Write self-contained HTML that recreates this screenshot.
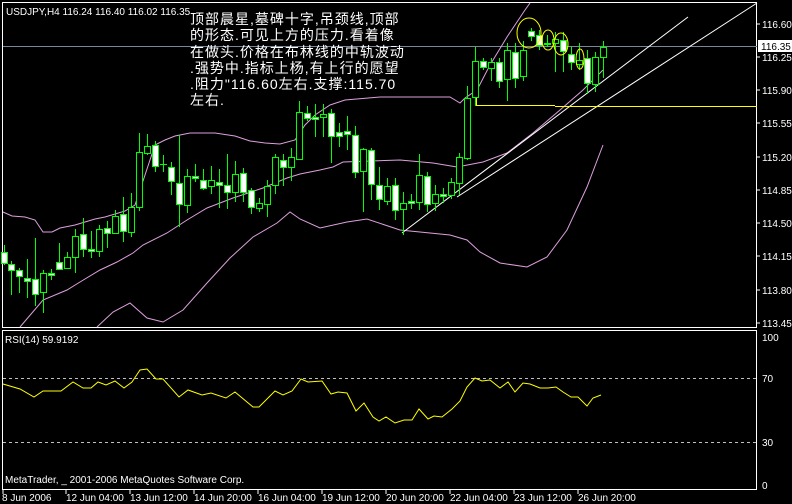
<!DOCTYPE html>
<html><head><meta charset="utf-8"><style>
html,body{margin:0;padding:0;background:#000;}
body{width:792px;height:504px;overflow:hidden;position:relative;}
svg{position:absolute;left:0;top:0;}
.t{font-family:"Liberation Sans",sans-serif;font-size:10px;fill:#fff;}
.cn{position:absolute;left:190px;top:11px;color:#fff;font-family:"Liberation Sans","WenQuanYi Zen Hei",sans-serif;font-size:14px;line-height:16.3px;letter-spacing:1px;white-space:pre;}
</style></head><body>
<svg width="792" height="504" xmlns="http://www.w3.org/2000/svg" shape-rendering="crispEdges">
<rect x="2.5" y="2.5" width="754" height="325" fill="none" stroke="#fff"/>
<rect x="2.5" y="330.5" width="754" height="159" fill="none" stroke="#fff"/>
<g stroke="#fff">
<line x1="757" y1="24" x2="760" y2="24"/><line x1="757" y1="57" x2="760" y2="57"/><line x1="757" y1="90" x2="760" y2="90"/><line x1="757" y1="123" x2="760" y2="123"/><line x1="757" y1="157" x2="760" y2="157"/><line x1="757" y1="190" x2="760" y2="190"/><line x1="757" y1="223" x2="760" y2="223"/><line x1="757" y1="256" x2="760" y2="256"/><line x1="757" y1="290" x2="760" y2="290"/><line x1="757" y1="323" x2="760" y2="323"/>
<line x1="3" y1="490" x2="3" y2="494"/><line x1="66" y1="490" x2="66" y2="494"/><line x1="130" y1="490" x2="130" y2="494"/><line x1="194" y1="490" x2="194" y2="494"/><line x1="258" y1="490" x2="258" y2="494"/><line x1="322" y1="490" x2="322" y2="494"/><line x1="386" y1="490" x2="386" y2="494"/><line x1="450" y1="490" x2="450" y2="494"/><line x1="514" y1="490" x2="514" y2="494"/><line x1="578" y1="490" x2="578" y2="494"/>
</g>
<g class="t">
<text x="762" y="28">116.60</text><text x="762" y="61">116.25</text><text x="762" y="94">115.90</text><text x="762" y="127">115.55</text><text x="762" y="161">115.20</text><text x="762" y="194">114.85</text><text x="762" y="227">114.50</text><text x="762" y="260">114.15</text><text x="762" y="294">113.80</text><text x="762" y="327">113.45</text>
<text x="762" y="341">100</text><text x="762" y="382">70</text><text x="762" y="446">30</text><text x="762" y="489">0</text>
<text x="2" y="501">8 Jun 2006</text><text x="66" y="501">12 Jun 04:00</text><text x="130" y="501">13 Jun 12:00</text><text x="194" y="501">14 Jun 20:00</text><text x="258" y="501">16 Jun 04:00</text><text x="322" y="501">19 Jun 12:00</text><text x="386" y="501">20 Jun 20:00</text><text x="450" y="501">22 Jun 04:00</text><text x="514" y="501">23 Jun 12:00</text><text x="578" y="501">26 Jun 20:00</text>
<text x="6" y="15">USDJPY,H4  116.24 116.40 116.02 116.35</text>
<text x="5" y="343">RSI(14) 59.9192</text>
<text x="5" y="483">MetaTrader, _ 2001-2006 MetaQuotes Software Corp.</text>
</g>
<line x1="3" y1="46.5" x2="757" y2="46.5" stroke="#778899"/>
<rect x="758" y="40" width="34" height="12" fill="#fff"/>
<text x="761" y="50" class="t" style="fill:#000">116.35</text>
<g fill="none" stroke="#dda0dd" shape-rendering="auto">
<polyline points="3,212 12,216 25,217 35,220 43,232 52,232 60,228 75,225 85,222 95,219 105,217 115,214 125,211 135,205 145,175 155,145 165,140 175,136 190,133 215,133 235,136 250,141 265,143 280,144 295,140 305,125 315,115 330,105 345,100 380,97 450,97 460,103 465,98 477,90 490,65 507,37 525,10 530,3"/>
<polyline points="20,327 43,300 67,290 80,282 100,270 117,262 133,253 143,245 167,233 187,220 207,208 233,198 263,188 287,178 300,174 320,170 333,167 343,162 400,160 433,163 457,167 483,162 507,153 533,133 560,110 583,90 603,70"/>
<polyline points="97,327 113,312 130,303 147,318 163,322 183,310 207,283 230,258 253,237 277,223 290,212 300,219 320,228 347,222 367,219 400,230 450,235 467,240 480,252 500,263 527,267 547,257 567,230 587,187 603,145"/>
</g>
<g stroke="#fff" shape-rendering="auto">
<line x1="402" y1="233" x2="688" y2="17"/>
<line x1="457" y1="197" x2="757" y2="3"/>
</g>
<line x1="476" y1="105.5" x2="555" y2="105.5" stroke="#ff0"/>
<line x1="555" y1="106.5" x2="757" y2="106.5" stroke="#ff0"/>
<line x1="476.5" y1="97" x2="476.5" y2="106" stroke="#ff0"/>
<g stroke="#0f0" shape-rendering="crispEdges">
<g>
<line x1="4.5" y1="245" x2="4.5" y2="265"/><line x1="11.5" y1="261" x2="11.5" y2="295"/><line x1="19.5" y1="268" x2="19.5" y2="293"/><line x1="27.5" y1="259" x2="27.5" y2="298"/><line x1="35.5" y1="238" x2="35.5" y2="306"/><line x1="43.5" y1="270" x2="43.5" y2="313"/><line x1="51.5" y1="269" x2="51.5" y2="280"/><line x1="59.5" y1="243" x2="59.5" y2="270"/><line x1="67.5" y1="252" x2="67.5" y2="268"/><line x1="75.5" y1="229" x2="75.5" y2="273"/><line x1="83.5" y1="218" x2="83.5" y2="257"/><line x1="91.5" y1="231" x2="91.5" y2="258"/><line x1="99.5" y1="225" x2="99.5" y2="257"/><line x1="107.5" y1="221" x2="107.5" y2="248"/><line x1="115.5" y1="210" x2="115.5" y2="234"/><line x1="123.5" y1="197" x2="123.5" y2="242"/><line x1="131.5" y1="193" x2="131.5" y2="237"/><line x1="139.5" y1="133" x2="139.5" y2="211"/><line x1="147.5" y1="134" x2="147.5" y2="155"/><line x1="155.5" y1="141" x2="155.5" y2="172"/><line x1="163.5" y1="155" x2="163.5" y2="172"/><line x1="160" y1="164.5" x2="167" y2="164.5"/><line x1="171.5" y1="162" x2="171.5" y2="195"/><line x1="179.5" y1="135" x2="179.5" y2="227"/><line x1="187.5" y1="169" x2="187.5" y2="213"/><line x1="195.5" y1="164" x2="195.5" y2="182"/><line x1="203.5" y1="169" x2="203.5" y2="190"/><line x1="211.5" y1="166" x2="211.5" y2="194"/><line x1="219.5" y1="169" x2="219.5" y2="208"/><line x1="227.5" y1="154" x2="227.5" y2="209"/><line x1="235.5" y1="161" x2="235.5" y2="202"/><line x1="243.5" y1="168" x2="243.5" y2="202"/><line x1="251.5" y1="188" x2="251.5" y2="214"/><line x1="259.5" y1="198" x2="259.5" y2="212"/><line x1="267.5" y1="180" x2="267.5" y2="217"/><line x1="275.5" y1="154" x2="275.5" y2="194"/><line x1="283.5" y1="154" x2="283.5" y2="186"/><line x1="291.5" y1="148" x2="291.5" y2="181"/><line x1="299.5" y1="101" x2="299.5" y2="160"/><line x1="307.5" y1="106" x2="307.5" y2="121"/><line x1="315.5" y1="104" x2="315.5" y2="137"/><line x1="323.5" y1="104" x2="323.5" y2="137"/><line x1="331.5" y1="109" x2="331.5" y2="163"/><line x1="339.5" y1="123" x2="339.5" y2="147"/><line x1="347.5" y1="116" x2="347.5" y2="150"/><line x1="355.5" y1="126" x2="355.5" y2="178"/><line x1="363.5" y1="148" x2="363.5" y2="212"/><line x1="371.5" y1="148" x2="371.5" y2="200"/><line x1="379.5" y1="167" x2="379.5" y2="210"/><line x1="387.5" y1="178" x2="387.5" y2="205"/><line x1="395.5" y1="178" x2="395.5" y2="220"/><line x1="403.5" y1="192" x2="403.5" y2="235"/><line x1="411.5" y1="194" x2="411.5" y2="209"/><line x1="419.5" y1="154" x2="419.5" y2="210"/><line x1="427.5" y1="172" x2="427.5" y2="212"/><line x1="435.5" y1="185" x2="435.5" y2="211"/><line x1="443.5" y1="188" x2="443.5" y2="203"/><line x1="451.5" y1="178" x2="451.5" y2="199"/><line x1="459.5" y1="153" x2="459.5" y2="195"/><line x1="467.5" y1="86" x2="467.5" y2="160"/><line x1="475.5" y1="47" x2="475.5" y2="106"/><line x1="483.5" y1="58" x2="483.5" y2="70"/><line x1="491.5" y1="58" x2="491.5" y2="81"/><line x1="499.5" y1="58" x2="499.5" y2="88"/><line x1="507.5" y1="43" x2="507.5" y2="101"/><line x1="515.5" y1="43" x2="515.5" y2="88"/><line x1="523.5" y1="41" x2="523.5" y2="81"/><line x1="531.5" y1="28" x2="531.5" y2="41"/><line x1="539.5" y1="30" x2="539.5" y2="50"/><line x1="547.5" y1="35" x2="547.5" y2="47"/><line x1="555.5" y1="32" x2="555.5" y2="72"/><line x1="563.5" y1="32" x2="563.5" y2="72"/><line x1="571.5" y1="47" x2="571.5" y2="70"/><line x1="579.5" y1="43" x2="579.5" y2="70"/><line x1="587.5" y1="50" x2="587.5" y2="94"/><line x1="595.5" y1="52" x2="595.5" y2="92"/><line x1="603.5" y1="41" x2="603.5" y2="78"/>
</g>
<g fill="#fff">
<rect x="1.5" y="252.5" width="6" height="11"/><rect x="8.5" y="264.5" width="6" height="6"/><rect x="16.5" y="270.5" width="6" height="6"/><rect x="24.5" y="278.5" width="6" height="3"/><rect x="32.5" y="279.5" width="6" height="15"/><rect x="48.5" y="273.5" width="6" height="2"/><rect x="56.5" y="262.5" width="6" height="7"/><rect x="80.5" y="234.5" width="6" height="15"/><rect x="88.5" y="249.5" width="6" height="2"/><rect x="104.5" y="228.5" width="6" height="5"/><rect x="120.5" y="214.5" width="6" height="17"/><rect x="152.5" y="145.5" width="6" height="21"/><rect x="168.5" y="167.5" width="6" height="14"/><rect x="176.5" y="183.5" width="6" height="21"/><rect x="192.5" y="176.5" width="6" height="2"/><rect x="200.5" y="180.5" width="6" height="8"/><rect x="216.5" y="182.5" width="6" height="3"/><rect x="224.5" y="185.5" width="6" height="7"/><rect x="240.5" y="173.5" width="6" height="19"/><rect x="248.5" y="190.5" width="6" height="17"/><rect x="280.5" y="160.5" width="6" height="7"/><rect x="304.5" y="113.5" width="6" height="5"/><rect x="312.5" y="117.5" width="6" height="2"/><rect x="328.5" y="113.5" width="6" height="23"/><rect x="336.5" y="132.5" width="6" height="4"/><rect x="344.5" y="131.5" width="6" height="3"/><rect x="352.5" y="135.5" width="6" height="37"/><rect x="368.5" y="150.5" width="6" height="34"/><rect x="376.5" y="185.5" width="6" height="14"/><rect x="392.5" y="185.5" width="6" height="25"/><rect x="408.5" y="201.5" width="6" height="2"/><rect x="424.5" y="176.5" width="6" height="28"/><rect x="440.5" y="194.5" width="6" height="2"/><rect x="480.5" y="61.5" width="6" height="6"/><rect x="496.5" y="62.5" width="6" height="19"/><rect x="512.5" y="52.5" width="6" height="26"/><rect x="528.5" y="31.5" width="6" height="5"/><rect x="536.5" y="35.5" width="6" height="10"/><rect x="544.5" y="43.5" width="6" height="1"/><rect x="560.5" y="40.5" width="6" height="11"/><rect x="568.5" y="54.5" width="6" height="8"/><rect x="584.5" y="58.5" width="6" height="25"/>
</g>
<g fill="#000">
<rect x="40.5" y="273.5" width="6" height="19"/><rect x="64.5" y="257.5" width="6" height="11"/><rect x="72.5" y="236.5" width="6" height="21"/><rect x="96.5" y="229.5" width="6" height="22"/><rect x="112.5" y="216.5" width="6" height="17"/><rect x="128.5" y="207.5" width="6" height="25"/><rect x="136.5" y="152.5" width="6" height="55"/><rect x="144.5" y="146.5" width="6" height="7"/><rect x="184.5" y="176.5" width="6" height="29"/><rect x="208.5" y="180.5" width="6" height="6"/><rect x="232.5" y="174.5" width="6" height="18"/><rect x="256.5" y="203.5" width="6" height="5"/><rect x="264.5" y="186.5" width="6" height="18"/><rect x="272.5" y="157.5" width="6" height="28"/><rect x="288.5" y="157.5" width="6" height="10"/><rect x="296.5" y="112.5" width="6" height="47"/><rect x="320.5" y="114.5" width="6" height="3"/><rect x="360.5" y="149.5" width="6" height="22"/><rect x="384.5" y="186.5" width="6" height="15"/><rect x="400.5" y="203.5" width="6" height="6"/><rect x="416.5" y="175.5" width="6" height="27"/><rect x="432.5" y="194.5" width="6" height="9"/><rect x="448.5" y="182.5" width="6" height="13"/><rect x="456.5" y="157.5" width="6" height="26"/><rect x="464.5" y="98.5" width="6" height="60"/><rect x="472.5" y="61.5" width="6" height="36"/><rect x="488.5" y="62.5" width="6" height="6"/><rect x="504.5" y="50.5" width="6" height="29"/><rect x="520.5" y="50.5" width="6" height="26"/><rect x="552.5" y="39.5" width="6" height="4"/><rect x="576.5" y="60.5" width="6" height="4"/><rect x="592.5" y="57.5" width="6" height="27"/><rect x="600.5" y="47.5" width="6" height="10"/>
</g>
</g>
<g fill="none" stroke="#ff0" shape-rendering="auto">
<ellipse cx="529" cy="33" rx="12" ry="15"/>
<ellipse cx="548" cy="40" rx="6" ry="10"/>
<ellipse cx="561" cy="44" rx="7" ry="11"/>
<ellipse cx="580" cy="59" rx="4" ry="10"/>
</g>
<g stroke="#c0c0c0" stroke-dasharray="3,3">
<line x1="3" y1="378.5" x2="756" y2="378.5"/>
<line x1="3" y1="442.5" x2="756" y2="442.5"/>
</g>
<polyline fill="none" stroke="#ff0" shape-rendering="auto" points="3,384 20,389 34,397 43,391 61,391 73,382 83,388 91,388 98,382 106,385 115,381 124,388 132,382 140,370 147,369 156,379 163,379 179,397 188,390 202,395 211,393 226,398 235,392 253,407 259,407 275,391 283,395 292,391 301,379 308,382 322,381 331,394 338,392 347,393 356,411 364,403 373,417 379,421 386,417 395,423 404,420 412,420 419,409 428,419 434,416 442,417 452,409 460,401 467,387 475,378 482,381 490,380 500,388 508,382 515,392 523,383 530,384 540,388 548,388 556,387 563,392 571,397 578,397 587,406 593,398 601,395"/>
</svg>
<div class="cn">顶部晨星,墓碑十字,吊颈线,顶部
的形态.可见上方的压力.看着像
在做头.价格在布林线的中轨波动
.强势中.指标上杨,有上行的愿望
.阻力"116.60左右.支撑:115.70
左右.</div>
</body></html>
